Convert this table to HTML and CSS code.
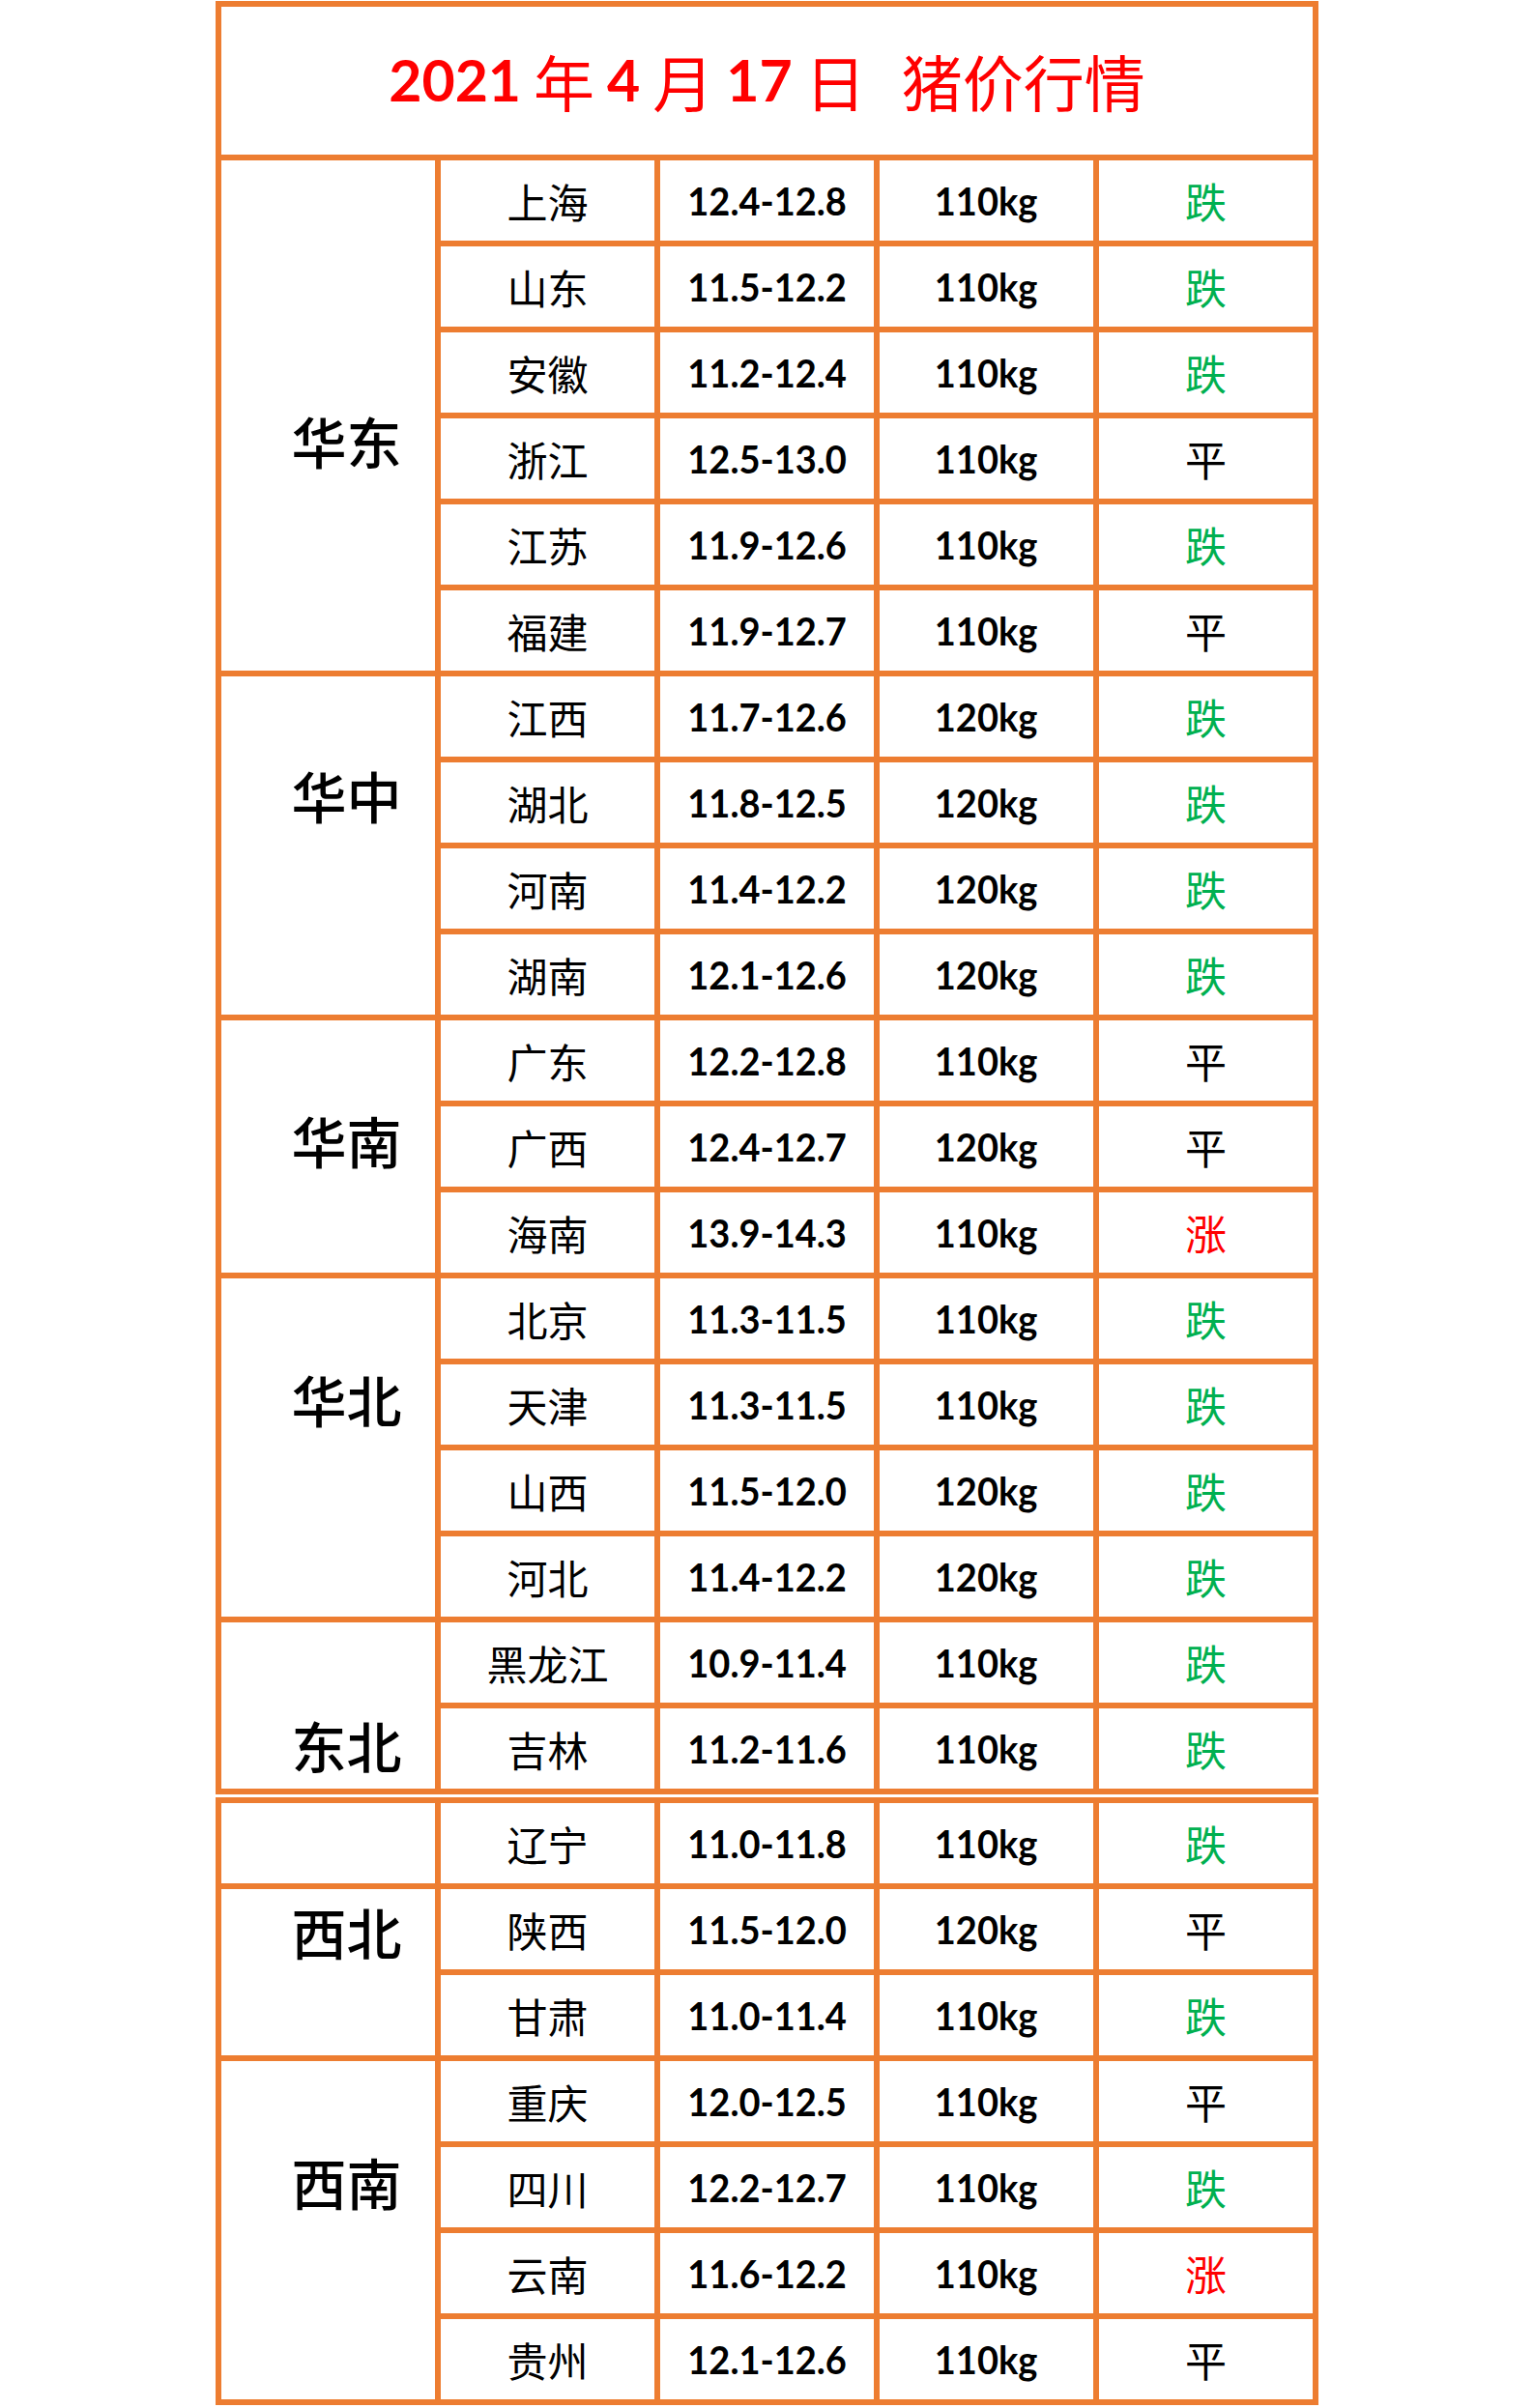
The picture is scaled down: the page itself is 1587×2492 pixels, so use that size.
FILE: index.html
```html
<!DOCTYPE html>
<html lang="zh-CN">
<head>
<meta charset="utf-8">
<title>2021年4月17日 猪价行情</title>
<link rel="stylesheet" href="styles.css">
</head>
<body>
<div class="sheet">
  <div class="table table-top">
    <div class="cell title">
      <span class="t-num">2021</span><span class="t-cjk">年</span><span class="t-num">4</span><span class="t-cjk">月</span><span class="t-num">17</span><span class="t-cjk">日</span><span class="t-cjk t-head">猪价行情</span>
    </div>

    <div class="cell group span-6 g-east"><span class="label">华东</span></div>
    <div class="cell"><span class="prov">上海</span></div><div class="cell"><span class="num range">12.4-12.8</span></div><div class="cell"><span class="num kg">110kg</span></div><div class="cell"><span class="trend down">跌</span></div>
    <div class="cell"><span class="prov">山东</span></div><div class="cell"><span class="num range">11.5-12.2</span></div><div class="cell"><span class="num kg">110kg</span></div><div class="cell"><span class="trend down">跌</span></div>
    <div class="cell"><span class="prov">安徽</span></div><div class="cell"><span class="num range">11.2-12.4</span></div><div class="cell"><span class="num kg">110kg</span></div><div class="cell"><span class="trend down">跌</span></div>
    <div class="cell"><span class="prov">浙江</span></div><div class="cell"><span class="num range">12.5-13.0</span></div><div class="cell"><span class="num kg">110kg</span></div><div class="cell"><span class="trend flat">平</span></div>
    <div class="cell"><span class="prov">江苏</span></div><div class="cell"><span class="num range">11.9-12.6</span></div><div class="cell"><span class="num kg">110kg</span></div><div class="cell"><span class="trend down">跌</span></div>
    <div class="cell"><span class="prov">福建</span></div><div class="cell"><span class="num range">11.9-12.7</span></div><div class="cell"><span class="num kg">110kg</span></div><div class="cell"><span class="trend flat">平</span></div>

    <div class="cell group span-4 g-central"><span class="label">华中</span></div>
    <div class="cell"><span class="prov">江西</span></div><div class="cell"><span class="num range">11.7-12.6</span></div><div class="cell"><span class="num kg">120kg</span></div><div class="cell"><span class="trend down">跌</span></div>
    <div class="cell"><span class="prov">湖北</span></div><div class="cell"><span class="num range">11.8-12.5</span></div><div class="cell"><span class="num kg">120kg</span></div><div class="cell"><span class="trend down">跌</span></div>
    <div class="cell"><span class="prov">河南</span></div><div class="cell"><span class="num range">11.4-12.2</span></div><div class="cell"><span class="num kg">120kg</span></div><div class="cell"><span class="trend down">跌</span></div>
    <div class="cell"><span class="prov">湖南</span></div><div class="cell"><span class="num range">12.1-12.6</span></div><div class="cell"><span class="num kg">120kg</span></div><div class="cell"><span class="trend down">跌</span></div>

    <div class="cell group span-3 g-south"><span class="label">华南</span></div>
    <div class="cell"><span class="prov">广东</span></div><div class="cell"><span class="num range">12.2-12.8</span></div><div class="cell"><span class="num kg">110kg</span></div><div class="cell"><span class="trend flat">平</span></div>
    <div class="cell"><span class="prov">广西</span></div><div class="cell"><span class="num range">12.4-12.7</span></div><div class="cell"><span class="num kg">120kg</span></div><div class="cell"><span class="trend flat">平</span></div>
    <div class="cell"><span class="prov">海南</span></div><div class="cell"><span class="num range">13.9-14.3</span></div><div class="cell"><span class="num kg">110kg</span></div><div class="cell"><span class="trend up">涨</span></div>

    <div class="cell group span-4 g-north"><span class="label">华北</span></div>
    <div class="cell"><span class="prov">北京</span></div><div class="cell"><span class="num range">11.3-11.5</span></div><div class="cell"><span class="num kg">110kg</span></div><div class="cell"><span class="trend down">跌</span></div>
    <div class="cell"><span class="prov">天津</span></div><div class="cell"><span class="num range">11.3-11.5</span></div><div class="cell"><span class="num kg">110kg</span></div><div class="cell"><span class="trend down">跌</span></div>
    <div class="cell"><span class="prov">山西</span></div><div class="cell"><span class="num range">11.5-12.0</span></div><div class="cell"><span class="num kg">120kg</span></div><div class="cell"><span class="trend down">跌</span></div>
    <div class="cell"><span class="prov">河北</span></div><div class="cell"><span class="num range">11.4-12.2</span></div><div class="cell"><span class="num kg">120kg</span></div><div class="cell"><span class="trend down">跌</span></div>

    <div class="cell group span-2 g-northeast"><span class="label">东北</span></div>
    <div class="cell"><span class="prov">黑龙江</span></div><div class="cell"><span class="num range">10.9-11.4</span></div><div class="cell"><span class="num kg">110kg</span></div><div class="cell"><span class="trend down">跌</span></div>
    <div class="cell"><span class="prov">吉林</span></div><div class="cell"><span class="num range">11.2-11.6</span></div><div class="cell"><span class="num kg">110kg</span></div><div class="cell"><span class="trend down">跌</span></div>
  </div>

  <div class="table table-bottom">
    <div class="cell group"></div>
    <div class="cell"><span class="prov">辽宁</span></div><div class="cell"><span class="num range">11.0-11.8</span></div><div class="cell"><span class="num kg">110kg</span></div><div class="cell"><span class="trend down">跌</span></div>

    <div class="cell group span-2 g-northwest"><span class="label">西北</span></div>
    <div class="cell"><span class="prov">陕西</span></div><div class="cell"><span class="num range">11.5-12.0</span></div><div class="cell"><span class="num kg">120kg</span></div><div class="cell"><span class="trend flat">平</span></div>
    <div class="cell"><span class="prov">甘肃</span></div><div class="cell"><span class="num range">11.0-11.4</span></div><div class="cell"><span class="num kg">110kg</span></div><div class="cell"><span class="trend down">跌</span></div>

    <div class="cell group span-4 g-southwest"><span class="label">西南</span></div>
    <div class="cell"><span class="prov">重庆</span></div><div class="cell"><span class="num range">12.0-12.5</span></div><div class="cell"><span class="num kg">110kg</span></div><div class="cell"><span class="trend flat">平</span></div>
    <div class="cell"><span class="prov">四川</span></div><div class="cell"><span class="num range">12.2-12.7</span></div><div class="cell"><span class="num kg">110kg</span></div><div class="cell"><span class="trend down">跌</span></div>
    <div class="cell"><span class="prov">云南</span></div><div class="cell"><span class="num range">11.6-12.2</span></div><div class="cell"><span class="num kg">110kg</span></div><div class="cell"><span class="trend up">涨</span></div>
    <div class="cell"><span class="prov">贵州</span></div><div class="cell"><span class="num range">12.1-12.6</span></div><div class="cell"><span class="num kg">110kg</span></div><div class="cell"><span class="trend flat">平</span></div>
  </div>
</div>
</body>
</html>
```

FILE: styles.css
```css
html, body {
  margin: 0;
  padding: 0;
  background: #ffffff;
}

.sheet {
  width: 1141px;
  margin: 0 auto;
  padding-top: 1px;
}

.table {
  display: grid;
  grid-template-columns: repeat(5, 221px);
  grid-auto-rows: 83px;
  gap: 6px;
  padding: 6px;
  background: #ed7d31;
}

.table-top {
  grid-template-rows: 153px;
}

.table-bottom {
  margin-top: 3px;
}

.cell {
  background: #ffffff;
  display: flex;
  align-items: center;
  justify-content: center;
  min-width: 0;
  overflow: hidden;
}

/* Title */
.title {
  grid-column: 1 / -1;
  color: #ff0000;
  gap: 13px;
  align-items: center;
  padding-bottom: 3px;
}

.t-num {
  font-family: Lato, "Open Sans", "Liberation Sans", sans-serif;
  font-weight: 700;
  font-size: 59px;
  line-height: 1;
}

.t-cjk {
  font-family: "Noto Sans CJK SC", sans-serif;
  font-weight: 400;
  font-size: 63px;
  line-height: 1;
}

.t-head {
  margin-left: 24px;
}

/* Group cells */
.span-2 { grid-row: span 2; }
.span-3 { grid-row: span 3; }
.span-4 { grid-row: span 4; }
.span-6 { grid-row: span 6; }

.group {
  padding-left: 38px;
}

.label {
  font-family: "Noto Sans CJK SC", sans-serif;
  font-weight: 500;
  font-size: 57px;
  line-height: 1;
  color: #000000;
}

.g-east .label { margin-top: 50px; }
.g-central .label { margin-bottom: 106px; }
.g-south .label { margin-bottom: 15px; }
.g-north .label { margin-bottom: 102px; }
.g-northeast .label { margin-top: 80px; }
.g-northwest .label { margin-bottom: 86px; }
.g-southwest .label { margin-bottom: 102px; }

/* Row text */
.prov {
  font-family: "Noto Sans CJK SC", sans-serif;
  font-weight: 400;
  font-size: 42px;
  line-height: 1;
  color: #000000;
}

.num {
  display: inline-block;
  font-family: Lato, "Open Sans", "Liberation Sans", sans-serif;
  font-weight: 700;
  font-size: 40px;
  line-height: 1;
  color: #000000;
}

.range {
  transform: scaleX(0.95);
}

.kg {
  transform: scaleX(0.95);
}

.trend {
  font-family: "Noto Sans CJK SC", sans-serif;
  font-weight: 400;
  font-size: 43px;
  line-height: 1;
}

.down { color: #00b050; }
.flat { color: #000000; }
.up { color: #ff0000; }
```
